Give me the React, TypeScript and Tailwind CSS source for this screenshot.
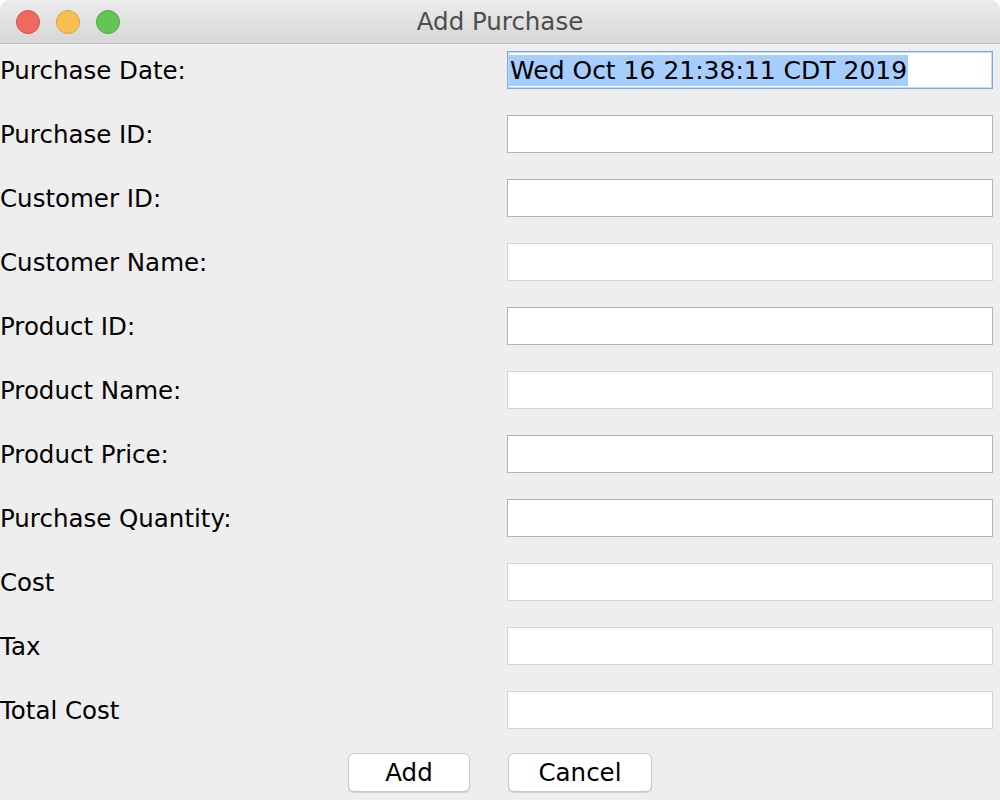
import React from 'react';

type Field = {
  label: string;
  editable: boolean;
  value?: string;
};

const fields: Field[] = [
  { label: 'Purchase Date:', editable: true, value: 'Wed Oct 16 21:38:11 CDT 2019' },
  { label: 'Purchase ID:', editable: true },
  { label: 'Customer ID:', editable: true },
  { label: 'Customer Name:', editable: false },
  { label: 'Product ID:', editable: true },
  { label: 'Product Name:', editable: false },
  { label: 'Product Price:', editable: true },
  { label: 'Purchase Quantity:', editable: true },
  { label: 'Cost', editable: false },
  { label: 'Tax', editable: false },
  { label: 'Total Cost', editable: false },
];

const font = "font-['DejaVu_Sans',_'Liberation_Sans',_sans-serif]";

const TitleBar: React.FC = () => (
  <div className="relative h-[44px] rounded-t-[10px] bg-gradient-to-b from-[#ececec] to-[#d6d6d6] border-b border-[#c2c2c2] flex items-center justify-center">
    <div className="absolute left-[16px] top-[10px] flex gap-[16px]">
      <span className="w-[24px] h-[24px] rounded-full bg-[#ee6a5f] border border-[#d4544a]" />
      <span className="w-[24px] h-[24px] rounded-full bg-[#f5c04f] border border-[#d8a440]" />
      <span className="w-[24px] h-[24px] rounded-full bg-[#62c554] border border-[#50a944]" />
    </div>
    <span className={`${font} text-[24.5px] text-[#4d4d4d] leading-none pt-[2px]`}>Add Purchase</span>
  </div>
);

const TextField: React.FC<{ field: Field; focused?: boolean }> = ({ field, focused }) => {
  if (focused) {
    return (
      <div className="h-[38px] bg-white border border-[#7aa9e3] shadow-[inset_0_0_0_1px_#c3dbf7] flex items-center pl-[1px]">
        <span className={`${font} text-[25px] leading-[30px] pt-[1px] text-black bg-[#a6cdfd] px-[1px] whitespace-nowrap`}>
          {field.value}
        </span>
      </div>
    );
  }
  return (
    <div
      className={
        field.editable
          ? 'h-[38px] bg-white border border-[#b4b4b4]'
          : 'h-[38px] bg-white border border-[#d3d3d3]'
      }
    />
  );
};

export default function App() {
  return (
    <div className="w-[1000px] h-[800px] bg-white overflow-hidden">
      <div className="w-[1000px] h-[800px] bg-[#eeeeee] rounded-t-[10px] flex flex-col">
        <TitleBar />
        <div className="flex flex-col gap-[26px] pt-[7px] pr-[7px]">
          {fields.map((f, i) => (
            <div key={f.label} className="grid grid-cols-[507px_1fr] items-center">
              <span className={`${font} text-[24.5px] leading-none pt-[3px] text-black whitespace-nowrap`}>{f.label}</span>
              <TextField field={f} focused={i === 0} />
            </div>
          ))}
        </div>
        <div className="flex justify-center gap-[38px] mt-[24px]">
          <button className={`${font} w-[122px] h-[39px] pt-[2px] bg-white rounded-[6px] border border-[#c9c9c9] shadow-[0_1px_1px_rgba(0,0,0,0.15)] text-[24.5px] text-black leading-none`}>
            Add
          </button>
          <button className={`${font} w-[144px] h-[39px] pt-[2px] bg-white rounded-[6px] border border-[#c9c9c9] shadow-[0_1px_1px_rgba(0,0,0,0.15)] text-[24.5px] text-black leading-none`}>
            Cancel
          </button>
        </div>
      </div>
    </div>
  );
}
